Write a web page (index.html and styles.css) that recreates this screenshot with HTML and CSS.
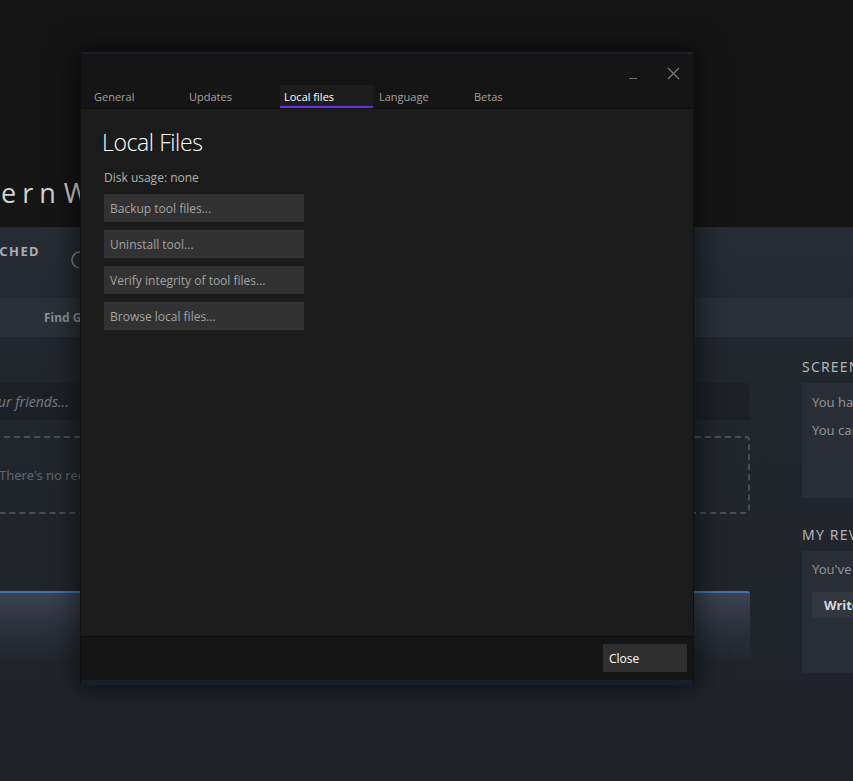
FILE: index.html
```html
<!DOCTYPE html>
<html lang="en">
<head>
<meta charset="utf-8">
<title>Local Files</title>
<link rel="stylesheet" href="styles.css">
</head>
<body>
<div class="page">
  <header class="hero">
    <h1 class="game-title">Modern Warfare</h1>
  </header>
  <div class="stats-bar">
    <span class="stat-label">Launched</span>
    <svg class="spinner" width="20" height="20" viewBox="0 0 20 20"><circle cx="10" cy="10" r="8" fill="none" stroke="#7f858c" stroke-width="1.5" stroke-dasharray="30 20" transform="rotate(100 10 10)"/></svg>
  </div>
  <nav class="subnav"><span class="subnav-link">Find Groups</span></nav>
  <main class="content">
    <section class="activity">
      <div class="friend-search"><span class="placeholder">Search your friends...</span></div>
      <div class="empty-activity">There's no recent activity</div>
      <div class="panel-blue"></div>
    </section>
    <aside class="sidebar">
      <h2 class="side-title">Screenshots</h2>
      <div class="side-box shots">
        <p>You have no screenshots</p>
        <p>You can take screenshots</p>
      </div>
      <h2 class="side-title">My Review</h2>
      <div class="side-box review">
        <p>You've not reviewed this</p>
        <button class="write-btn">Write a review</button>
      </div>
    </aside>
  </main>
</div>

<div class="dialog">
  <div class="dlg-head">
    <div class="titlebar">
      <svg class="ctl" width="12" height="12" viewBox="0 0 12 12"><line x1="2" y1="10.5" x2="10" y2="10.5" stroke="#707070" stroke-width="1"/></svg>
      <svg class="ctl close-x" width="13" height="13" viewBox="0 0 13 13"><path d="M1 1 L12 12 M12 1 L1 12" stroke="#7a7a7a" stroke-width="1.2" fill="none"/></svg>
    </div>
    <div class="tabs">
      <div class="tab">General</div>
      <div class="tab">Updates</div>
      <div class="tab active">Local files</div>
      <div class="tab">Language</div>
      <div class="tab">Betas</div>
    </div>
  </div>
  <div class="dlg-body">
    <h2 class="dlg-title">Local Files</h2>
    <div class="disk">Disk usage: none</div>
    <div class="actions">
      <button class="act">Backup tool files...</button>
      <button class="act">Uninstall tool...</button>
      <button class="act">Verify integrity of tool files...</button>
      <button class="act">Browse local files...</button>
    </div>
  </div>
  <div class="dlg-foot">
    <button class="close-btn">Close</button>
  </div>
</div>
</body>
</html>
```

FILE: styles.css
```css
html, body {
  margin: 0;
  padding: 0;
}
body {
  width: 853px;
  height: 781px;
  overflow: hidden;
  background: #151515;
  position: relative;
  font-family: "Open Sans", "Noto Sans", sans-serif;
}
.page {
  width: 853px;
  height: 781px;
  display: flex;
  flex-direction: column;
  overflow: hidden;
}
.hero {
  height: 227px;
  flex: none;
  background: #151515;
  padding-top: 175px;
  box-sizing: border-box;
  overflow: hidden;
}
.game-title {
  margin: 0 0 0 -74px;
  font-size: 27px;
  line-height: 36px;
  font-weight: 400;
  letter-spacing: 6px;
  word-spacing: -11px;
  color: #d2d2d2;
  white-space: nowrap;
}
.stats-bar {
  height: 71px;
  flex: none;
  background: linear-gradient(180deg, #272c34, #242931);
  display: flex;
  align-items: flex-start;
  padding-top: 16px;
  box-sizing: border-box;
}
.stat-label {
  width: 140px;
  margin-left: -100px;
  text-align: right;
  text-transform: uppercase;
  font-family: "Noto Sans", sans-serif;
  font-weight: 700;
  font-size: 13px;
  line-height: 16px;
  letter-spacing: 1.4px;
  color: #a9aeb3;
}
.spinner {
  margin-left: 30px;
  margin-top: 7px;
}
.subnav {
  height: 39px;
  flex: none;
  background: #2a3038;
  padding-left: 44px;
  box-sizing: border-box;
}
.subnav-link {
  font-family: "Noto Sans", sans-serif;
  font-weight: 700;
  font-size: 12px;
  line-height: 39px;
  color: #8a9096;
}
.content {
  flex: 1;
  display: flex;
  gap: 52px;
  background: linear-gradient(180deg, #22262d 0%, #20242a 100%);
}
.activity {
  width: 850px;
  flex: none;
  margin-left: -100px;
  padding-top: 46px;
  font-family: "Noto Sans", sans-serif;
}
.friend-search {
  height: 37px;
  background: #1d2127;
  border-radius: 3px;
  padding-left: 100px;
  display: flex;
  align-items: center;
  overflow: hidden;
}
.placeholder {
  font-style: italic;
  font-size: 14px;
  color: #727880;
  text-indent: -62px;
  display: block;
  white-space: nowrap;
}
.empty-activity {
  margin-top: 16px;
  height: 78px;
  box-sizing: border-box;
  border: 2px dashed #4a4f56;
  border-radius: 4px;
  padding-left: 97px;
  line-height: 74px;
  font-size: 13px;
  color: #61676e;
  white-space: nowrap;
}
.panel-blue {
  margin-top: 77px;
  height: 70px;
  border-top: 2px solid #4a70ab;
  border-radius: 3px 3px 0 0;
  background: linear-gradient(180deg, #3b4352 0%, #2a2f38 55%, rgba(34,38,45,0) 100%);
}
.sidebar {
  width: 300px;
  flex: none;
  padding-top: 22px;
  font-family: "Noto Sans", sans-serif;
}
.side-title {
  margin: 0;
  font-size: 14px;
  line-height: 16px;
  font-weight: 400;
  letter-spacing: 1.2px;
  text-transform: uppercase;
  color: #b0b5ba;
  white-space: nowrap;
}
.side-box {
  margin-top: 8px;
  background: #292e36;
  border-radius: 2px;
  padding: 10px;
  box-sizing: border-box;
}
.side-box p {
  margin: 0;
  font-size: 13px;
  line-height: 18px;
  color: #8d9298;
  white-space: nowrap;
}
.shots {
  height: 115px;
  margin-bottom: 29px;
}
.shots p + p {
  margin-top: 10px;
}
.review {
  height: 122px;
  padding-top: 9px;
}
.write-btn {
  display: block;
  margin-top: 14px;
  height: 26px;
  border: none;
  border-radius: 2px;
  background: #31363f;
  color: #d6d9dc;
  font-family: "Noto Sans", sans-serif;
  font-weight: 700;
  font-size: 13px;
  padding: 0 12px;
  white-space: nowrap;
}

/* Dialog overlay */
.dialog {
  position: absolute;
  left: 80px;
  top: 52px;
  width: 614px;
  background: #151515;
  border-top: 2px solid #1c1c2c;
  border-bottom: 5px solid #1a1d2a;
  border-left: 1px solid #101010;
  border-right: 1px solid #101010;
  box-sizing: border-box;
  border-radius: 3px;
  box-shadow: 0 0 26px 6px rgba(0, 0, 0, 0.5);
  display: flex;
  flex-direction: column;
  font-family: "Open Sans", "Noto Sans", sans-serif;
}
.dlg-head {
  height: 55px;
  box-sizing: border-box;
  border-bottom: 1px solid #0f0f0f;
  display: flex;
  flex-direction: column;
}
.titlebar {
  height: 31px;
  display: flex;
  justify-content: flex-end;
  align-items: flex-end;
  padding: 0 13px 5px 0;
  box-sizing: border-box;
  gap: 28px;
}
.tabs {
  height: 23px;
  display: flex;
  padding-left: 9px;
}
.tab {
  width: 95px;
  box-sizing: border-box;
  padding: 2px 0 0 4px;
  font-size: 11px;
  line-height: 19px;
  color: #a2a2a2;
  border-bottom: 2px solid transparent;
}
.tab.active {
  width: 93px;
  margin-right: 2px;
  background: #1c1c1c;
  color: #ffffff;
  border-bottom-color: #6a2ee6;
}
.dlg-body {
  height: 527px;
  background: #1b1b1b;
  padding: 18px 23px;
  box-sizing: border-box;
}
.dlg-title {
  margin: 0 0 0 -2px;
  font-size: 23px;
  line-height: 30px;
  font-weight: 300;
  letter-spacing: -0.4px;
  color: #ffffff;
}
.disk {
  margin-top: 12px;
  font-size: 12px;
  line-height: 18px;
  color: #b2b2b2;
}
.actions {
  margin-top: 7px;
  display: flex;
  flex-direction: column;
  gap: 8px;
  align-items: flex-start;
}
.act {
  width: 200px;
  height: 28px;
  border: none;
  background: #323232;
  color: #a3a3a3;
  font-family: "Open Sans", "Noto Sans", sans-serif;
  font-size: 12px;
  text-align: left;
  padding: 0 6px;
}
.dlg-foot {
  height: 44px;
  box-sizing: border-box;
  border-top: 1px solid #0e0e0e;
  background: #151515;
  display: flex;
  justify-content: flex-end;
  align-items: flex-start;
  padding: 7px 6px 0 0;
}
.close-btn {
  width: 84px;
  height: 28px;
  border: none;
  background: #2f2f2f;
  color: #ffffff;
  font-family: "Open Sans", "Noto Sans", sans-serif;
  font-size: 12px;
  text-align: left;
  padding: 0 6px;
}
```
